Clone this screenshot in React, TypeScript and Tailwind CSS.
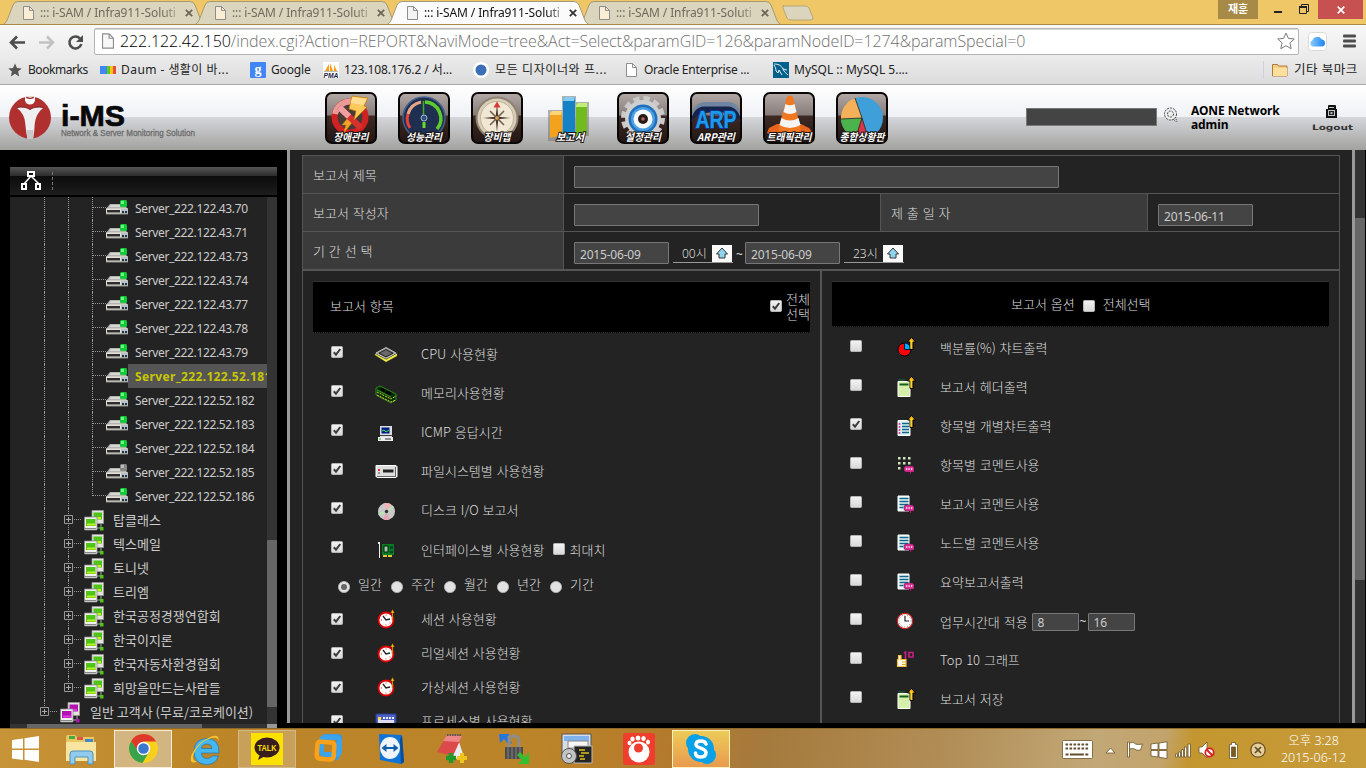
import React from 'react';

const KR = "font-['Noto_Sans','Noto_Sans_CJK_KR',sans-serif]";
const PAGE = "font-['Noto_Sans_CJK_KR','Noto_Sans',sans-serif]";

/* ---------- browser chrome ---------- */

function PageIcon({ fill = '#fff', big = false }: { fill?: string; big?: boolean }) {
  return (
    <svg className={big ? 'h-4 w-3 shrink-0' : 'h-[14px] w-[11px] shrink-0'} viewBox="0 0 11 14">
      <path d="M.5.5h6l4 4v9H.5z" fill={fill} stroke="#8d8d8d" />
      <path d="M6.5.5v4h4" fill="none" stroke="#8d8d8d" />
    </svg>
  );
}

function Tab({ active = false }: { active?: boolean }) {
  return (
    <div className={active ? 'relative z-10 -mr-[14px] h-[25px] w-[206px] shrink-0' : 'relative -mr-[14px] h-[25px] w-[206px] shrink-0'}>
      <svg className="absolute inset-0 h-[25px] w-[206px]" viewBox="0 0 206 25">
        <path
          d="M0 25C4 24.500 5.500 22 7 18L12 5Q13.500 1.500 17 1.500H189Q192.500 1.500 194 5L199 18C200.500 22 202 24.500 206 25Z"
          fill={active ? '#fbfbfb' : '#dcd5bd'}
          stroke={active ? '#a69a78' : '#a89a70'}
        />
        {active && <path d="M4 24.500h198" stroke="#fafafa" strokeWidth="1.500" />}
      </svg>
      <div className="relative flex h-[25px] items-center pl-[22px]">
        <PageIcon fill={active ? '#f4f4f4' : '#fbecd6'} />
        <div
          className={
            active
              ? 'ml-[6px] w-[140px] whitespace-nowrap text-[12px] tracking-[-0.120px] text-[#111] [mask-image:linear-gradient(to_right,#000_88%,rgba(0,0,0,.25))]'
              : 'ml-[6px] w-[140px] whitespace-nowrap text-[12px] tracking-[-0.120px] text-[#6f6a5c] [mask-image:linear-gradient(to_right,#000_88%,rgba(0,0,0,.25))]'
          }
        >
          ::: i-SAM / Infra911-Soluti
        </div>
        <svg className="ml-[5px] h-2 w-2 shrink-0" viewBox="0 0 8 8">
          <path d="M.8.8l6.400 6.400M7.200.8L.8 7.200" stroke={active ? '#333' : '#6a6557'} strokeWidth="1.800" />
        </svg>
      </div>
    </div>
  );
}

function TabStrip() {
  return (
    <div className="relative flex h-[25px] overflow-hidden border-b border-[#a98b49] bg-[#f0c766]">
      <div className="flex w-[782px] pl-[1px]">
        <Tab />
        <Tab />
        <Tab active />
        <Tab />
      </div>
      <svg className="mt-[5px] h-4 w-8" viewBox="0 0 32 16">
        <path d="M1 1h22q3 0 4 2l4 10q.5 2-2 2H9q-3 0-4-2L1 3q-.8-2 1-2z" fill="#dcd5bd" stroke="#b5a67c" />
      </svg>
      <div className="flex-1" />
      <div className="h-[19px] w-10 bg-[#a68a45] text-center text-[11px] font-bold leading-[18px] text-white">재훈</div>
      <div className="flex w-[60px] pt-1">
        <svg className="h-[12px] w-[60px]" viewBox="0 0 60 12">
          <path d="M16 7h8v2h-8z" fill="#222" />
          <path d="M41.500 2.500h7v7h-7zM43.500 2.500v-2h7v7h-2" fill="none" stroke="#222" />
          <path d="M41 2h8v2h-8z" fill="#222" />
        </svg>
      </div>
      <div className="mr-[3px] flex h-[19px] w-[45px] items-center justify-center bg-[#c75050]">
        <svg className="h-2 w-2" viewBox="0 0 8 8"><path d="M.7.7l6.600 6.600M7.300.7L.7 7.300" stroke="#fff" strokeWidth="1.700" /></svg>
      </div>
    </div>
  );
}

function Toolbar() {
  return (
    <div className="flex h-8 items-center bg-gradient-to-b from-[#f8f8f8] to-[#ebebeb]">
      <svg className="h-8 w-[94px] shrink-0" viewBox="0 0 94 32">
        <path d="M25 17.500H12M17 11.500l-6 6 6 6" fill="none" stroke="#4d4d4d" strokeWidth="2.600" />
        <path d="M39 17.500h13M47 11.500l6 6-6 6" fill="none" stroke="#c2c2c2" strokeWidth="2.600" />
        <path d="M80 13.500A6 6 0 1 0 81.300 19" fill="none" stroke="#4d4d4d" strokeWidth="2.600" />
        <path d="M83 10v7h-7z" fill="#4d4d4d" />
      </svg>
      <div className="flex h-[27px] w-[1205px] items-center rounded-[2px] border border-[#b4b4b4] bg-white pl-[7px] pr-[3px] shadow-[inset_0_1px_0_#d9d9d9]">
        <PageIcon fill="#f7f7f7" big />
        <div className="ml-[6px] whitespace-nowrap font-['Open_Sans',sans-serif] text-[16px] font-light tracking-[-0.080px] text-[#707070]">
          <span className="text-[#000]">222.122.42.150</span>/index.cgi?Action=REPORT&amp;NaviMode=tree&amp;Act=Select&amp;paramGID=126&amp;paramNodeID=1274&amp;paramSpecial=0
        </div>
        <div className="flex-1" />
        <svg className="h-[18px] w-[18px]" viewBox="0 0 18 18">
          <path d="M9 1l2.400 5.400 5.900.6-4.400 3.900 1.300 5.800L9 13.700l-5.200 3 1.300-5.800L.7 7l5.900-.6z" fill="#fff" stroke="#7a7a7a" />
        </svg>
      </div>
      <svg className="ml-[9px] h-[19px] w-[19px]" viewBox="0 0 19 19">
        <defs><linearGradient id="cl" x1="0" x2="1"><stop stopColor="#8ccafc" /><stop offset="1" stopColor="#1b84f4" /></linearGradient></defs>
        <rect x=".5" y=".5" width="18" height="18" rx="3" fill="#fff" stroke="#dadada" />
        <path d="M4.500 14.500a3.200 3.200 0 0 1-.3-6 5.300 5.300 0 0 1 9.600-1A3.600 3.600 0 0 1 14.500 14.500z" fill="url(#cl)" />
      </svg>
      <svg className="ml-[16px] h-[14px] w-[14px]" viewBox="0 0 14 14">
        <g fill="#4d4d4d"><rect y="0.500" width="13" height="3" rx="1" /><rect y="5.500" width="13" height="3" rx="1" /><rect y="10.500" width="13" height="3" rx="1" /></g>
      </svg>
    </div>
  );
}

function Bookmarks() {
  const t = 'whitespace-nowrap text-[12px]';
  return (
    <div className="flex h-[28px] items-center border-b border-[#a9a9a9] bg-gradient-to-b from-[#ebebeb] to-[#dcdcdc] pb-px text-[#222]">
      <div className="flex w-[100px] items-center pl-2">
        <svg className="h-[14px] w-[14px]" viewBox="0 0 14 14"><path d="M7 .5l2 4.500 4.700.4-3.600 3.200 1.100 4.800L7 10.800l-4.200 2.600 1.100-4.800L.3 5.400 5 5z" fill="#555" /></svg>
        <span className={t + ' ml-[6px] tracking-[-0.450px]'}>Bookmarks</span>
      </div>
      <div className="flex w-[150px] items-center">
        <svg className="h-2 w-4" viewBox="0 0 16 8"><path d="M0 0h7v8H0z" fill="#3f87f5" /><path d="M7 0h3v8H7z" fill="#5fc91c" /><path d="M10 0h3v8h-3z" fill="#f6c712" /><path d="M13 0h3v8h-3z" fill="#ee4b3a" /></svg>
        <span className={t + ' ml-[5px] tracking-[0.450px]'}>Daum - 생활이 바...</span>
      </div>
      <div className="flex w-[73px] items-center">
        <svg className="h-4 w-4" viewBox="0 0 16 16"><rect width="16" height="16" rx="1" fill="#4285f4" /><text x="8" y="12" textAnchor="middle" fontSize="14" fontWeight="bold" fontFamily="Liberation Serif" fill="#fff">g</text></svg>
        <span className={t + ' ml-[5px] tracking-[-0.150px]'}>Google</span>
      </div>
      <div className="flex w-[150px] items-center">
        <svg className="h-4 w-4" viewBox="0 0 16 16"><rect width="16" height="16" fill="#fff" /><path d="M2 9l4-7v7zM7 9V1l3 8zM11 9V3l3 6z" fill="#f89c0e" /><path d="M1 9.500h14" stroke="#bbb" /><text x="0.500" y="15.800" fontSize="6.500" fontWeight="bold" fontFamily="Liberation Sans" fontStyle="italic" fill="#224" textLength="15" lengthAdjust="spacingAndGlyphs">PMA</text></svg>
        <span className={t + ' ml-[5px] tracking-[-0.080px]'}>123.108.176.2 / 서...</span>
      </div>
      <div className="flex w-[153px] items-center">
        <svg className="h-4 w-4" viewBox="0 0 16 16"><circle cx="8" cy="8" r="8" fill="#fff" /><circle cx="8" cy="8" r="5.500" fill="#3a6fb7" /></svg>
        <span className={t + ' ml-[6px] tracking-[0.600px]'}>모든 디자이너와 프...</span>
      </div>
      <div className="flex w-[147px] items-center">
        <PageIcon />
        <span className={t + ' ml-[7px] tracking-[-0.250px]'}>Oracle Enterprise ...</span>
      </div>
      <div className="flex items-center">
        <svg className="h-4 w-4" viewBox="0 0 16 16"><rect width="16" height="16" fill="#00618a" /><path d="M1 2c4 0 7 1 9 5 1 3 3 4 5 6M1 3c1 2 2 3 2 6l2 2 1-3 3 5M10 7l4 1" fill="none" stroke="#fff" strokeWidth=".9" /></svg>
        <span className={t + ' ml-[5px]'}>MySQL :: MySQL 5....</span>
      </div>
      <div className="flex-1" />
      <div className="flex w-[103px] items-center border-l border-[#c9d3dc] pl-[8px]">
        <svg className="h-[14px] w-4" viewBox="0 0 16 14"><path d="M.5 3V1.500h5l1 1.500h8.500v10H.5z" fill="#f5cf85" stroke="#b07a3c" /><path d="M1 5h14v8H1z" fill="#fddf9e" /></svg>
        <span className="ml-[6px] whitespace-nowrap text-[12.500px] tracking-[0.500px]">기타 북마크</span>
      </div>
    </div>
  );
}

/* ---------- application header ---------- */

function MenuArt({ kind }: { kind: number }) {
  switch (kind) {
    case 0:
      return (
        <g>
          <circle cx="25" cy="25" r="15.500" fill="#4a3a36" stroke="#d02222" strokeWidth="6" />
          <path d="M10 22a15.500 15.500 0 0 1 18-12.300" fill="none" stroke="#eb9a9a" strokeWidth="6" />
          <path d="M22 27l8 0-12 15 3-9h-4z" fill="#f0a52a" stroke="#c47a12" strokeWidth=".6" />
          <path d="M14 15l22 21" stroke="#d8302c" strokeWidth="6" />
          <path d="M14 15l10 9.500" stroke="#eea0a0" strokeWidth="6" />
          <path d="M27 4l16 2-4 8 3 1-13 13 2-9-7-2z" fill="#fdc95a" stroke="#c47a12" strokeWidth=".8" />
          <path d="M27.500 5l14 2-3 6-13-2z" fill="#fee6a6" opacity=".7" />
        </g>
      );
    case 1:
      return (
        <g>
          <circle cx="26" cy="26" r="21" fill="#1e2f50" stroke="#46608c" strokeWidth="1.500" />
          <path d="M12 36a16.500 16.500 0 0 1-2-14" fill="none" stroke="#e8433a" strokeWidth="3" />
          <path d="M10 22A17 17 0 0 1 23 10" fill="none" stroke="#e7a488" strokeWidth="3" />
          <path d="M27 10a16.500 16.500 0 0 1 12 27" fill="none" stroke="#5ecb2d" strokeWidth="3.500" />
          <path d="M25.500 9v15" stroke="#3faf2a" strokeWidth="1.500" />
          <circle cx="26" cy="26" r="3" fill="#31507c" stroke="#9fb4cf" />
          <path d="M26 30v6" stroke="#6ad92c" strokeWidth="3" />
        </g>
      );
    case 2:
      return (
        <g>
          <circle cx="26" cy="26" r="20.500" fill="#d8cdb6" stroke="#8d8272" strokeWidth="2" />
          <circle cx="26" cy="26" r="16.500" fill="#f0e8d4" stroke="#b8a88c" strokeWidth=".8" />
          <path d="M26 12l1.300 12.700L40 26l-12.700 1.300L26 40l-1.300-12.700L12 26l12.700-1.300z" fill="#463528" />
          <path d="M19 19l14 14M33 19L19 33" stroke="#6e5b48" strokeWidth="1.500" />
          <path d="M26 9.500l3.500 6h-7z" fill="#e03535" />
          <circle cx="26" cy="26" r="2.300" fill="#d6a45c" stroke="#463528" strokeWidth=".7" />
        </g>
      );
    case 3:
      return (
        <g>
          <g fill="#777" opacity=".55"><path d="M4 18h14v31H4zM18 4h14v41H18zM31 10h14v34H31z" /></g>
          <path d="M6 21l2-2h10v24l-12 3z" fill="#f3a21b" /><path d="M6 21l2-2h10l-1 4H6z" fill="#fdd67c" />
          <path d="M19 8l2-3h10v40H19z" fill="#1682c6" /><path d="M19 8l2-3h10l-1 4H19z" fill="#83cdf3" />
          <path d="M32 13l2-2h9v31l-11 3z" fill="#71bb1f" /><path d="M32 13l2-2h9v4H32z" fill="#c3ee79" />
        </g>
      );
    case 4:
      return (
        <g>
          <circle cx="26" cy="26" r="19.500" fill="none" stroke="#c9c9c9" strokeWidth="5" strokeDasharray="6.200 4" />
          <circle cx="26" cy="26" r="18" fill="#cfcfcf" />
          <circle cx="26" cy="27" r="14.500" fill="#1e6fbd" />
          <circle cx="26" cy="27" r="12" fill="#4b9fe2" />
          <circle cx="26" cy="27" r="9.500" fill="#f4f9fc" />
          <circle cx="26" cy="27" r="5" fill="#2a1815" />
          <circle cx="26" cy="27" r="1.800" fill="#a66" />
        </g>
      );
    case 5:
      return (
        <g>
          <path d="M2 24Q4 10 16 10h22q11 0 12 14-6-7-24-7T2 24z" fill="#6f86a3" />
          <path d="M1 30Q3 15 14 14.500h24q11 .5 13 15.500-6-10-25-10T1 30z" fill="#16234d" />
          <text x="26" y="36" textAnchor="middle" textLength="41" lengthAdjust="spacingAndGlyphs" fontSize="23" fontWeight="bold" fontFamily="Liberation Sans" fill="#1a9bea" stroke="#0c3c9c" strokeWidth="1.500" paintOrder="stroke">ARP</text>
        </g>
      );
    case 6:
      return (
        <g>
          <path d="M6 36l8-4h24l8 4 4 5-8 3H10l-6-3z" fill="#e8641a" />
          <path d="M24 5q3-3 6 0l8 33q-11 7-23 0z" fill="#f07820" />
          <path d="M22.500 12q4.500 2.500 9 0l2 8q-6.500 4-13 0zM18.500 26q8.500 5 17 0l2 7q-10.500 6-21 0z" fill="#f4f4f4" />
        </g>
      );
    default:
      return (
        <g>
          <circle cx="26" cy="26" r="21" fill="#3f9fd9" />
          <path d="M26 26L19 6A21 21 0 0 0 5 27z" fill="#f4b15a" />
          <path d="M26 26L5 27a21 21 0 0 0 14 18.500z" fill="#4cb34c" />
          <path d="M26 26l-7 19.500a21 21 0 0 0 13 0z" fill="#d9364c" />
          <path d="M26 26L19 6M26 26L5 27M26 26l-6 19M26 26l6 19" stroke="#2b211c" strokeWidth=".8" />
        </g>
      );
  }
}

const MENU = ['장애관리', '성능관리', '장비맵', '보고서', '설정관리', 'ARP관리', '트래픽관리', '종합상황판'];
const MENU_W = [35, 36, 27, 28, 36, 38, 45, 45];

function AppHeader() {
  return (
    <div className="flex h-[65px] items-start bg-[linear-gradient(to_bottom,#fff_0%,#eff1f5_50%,#d5d6da_50%,#a2a29f_100%)]">
      <svg className="ml-[8px] mt-[9px] h-[46px] w-[46px] shrink-0" viewBox="0 0 46 46">
        <circle cx="22" cy="23.500" r="21" fill="#b03030" />
        <path d="M17 2.500h10v4q-1 4-5 4t-5-4z" fill="#fafafa" />
        <path d="M18.500 2.600q3.500 2.400 7 0l.5 1.500q-4 2-8 0z" fill="#8d2424" />
        <path d="M8.500 13.500Q17 12 22 15.500 27 12 35.500 13.500 27.500 20 26.700 30 26.500 38 25 45h-5.500Q18 38 17.300 30 17 20 8.500 13.500z" fill="#efeff1" />
        <path d="M8.500 13.500Q17 12 22 15.500 27 12 35.500 13.500" fill="none" stroke="#6e1a1a" strokeWidth=".9" />
        <path d="M18.500 36h7.200L25 45h-5.500z" fill="#c8c9cb" />
      </svg>
      <svg className="ml-[6px] mt-[12px] h-[44px] w-[140px] shrink-0" viewBox="0 0 140 44">
        <text x="1" y="28.500" fontSize="29" fontWeight="bold" fontFamily="Liberation Sans" fill="#080808" stroke="#080808" strokeWidth=".7" textLength="64" lengthAdjust="spacingAndGlyphs">i-MS</text>
        <text x="1" y="39" fontSize="9" fontFamily="Liberation Sans" fill="#6c6c6c" stroke="#6c6c6c" strokeWidth=".3" textLength="134" lengthAdjust="spacingAndGlyphs">Network &amp; Server Monitoring Solution</text>
      </svg>
      <div className="ml-[125px] mt-[7px] flex gap-[21px]">
        {MENU.map((m, i) => (
          <svg key={m} className="h-[52px] w-[52px]" viewBox="0 0 52 52">
            <defs><linearGradient id="tile" x2="0" y2="1"><stop stopColor="#b3aaa8" /><stop offset=".44" stopColor="#867c79" /><stop offset=".46" stopColor="#3e2a25" /><stop offset="1" stopColor="#211512" /></linearGradient></defs>
            {i !== 3 && <rect x="1" y="1" width="50" height="50" rx="6" fill="url(#tile)" stroke="#090606" strokeWidth="2" />}
            <MenuArt kind={i} />
            <text x="26" y="49" textAnchor="middle" textLength={MENU_W[i]} lengthAdjust="spacingAndGlyphs" fontSize="10.500" fontWeight="bold" fontStyle="italic" fontFamily="Noto Sans CJK KR" fill="#fff" stroke="#1a1312" strokeWidth="2" paintOrder="stroke">{m}</text>
          </svg>
        ))}
      </div>
      <div className="ml-[138px] mt-[23px] h-[18px] w-[131px] border border-[#777] bg-[#444]" />
      <svg className="ml-[7px] mt-[22px] h-4 w-4" viewBox="0 0 16 16">
        <circle cx="6.500" cy="7" r="6" fill="#eee" stroke="#444" strokeDasharray="2 1" /><circle cx="6.500" cy="7" r="3" fill="none" stroke="#444" strokeDasharray="2 1" /><path d="M9 12l3 3M11.500 10l1.500 5" stroke="#444" strokeDasharray="1 1" />
      </svg>
      <div className="ml-[11px] mt-[19px] w-[100px] whitespace-nowrap text-[12px] font-bold leading-[14px] tracking-[-0.100px] text-black">
        <div>AONE Network</div>
        <div>admin</div>
      </div>
      <svg className="ml-[20px] mt-[19px] h-[30px] w-[46px]" viewBox="0 0 46 30">
        <path d="M15 5h2V2q0-1 1-1h6q1 0 1 1v3h1v9H15z" fill="#111" /><path d="M18 3h5v1h-5zM17 6h7v6h-7z" fill="#c4c4c4" /><path d="M18 7h5v4h-5z" fill="#222" /><path d="M19.500 8h2v2h-2z" fill="#bbb" />
        <text x="1" y="26" fontSize="7.500" fontWeight="bold" fontFamily="DejaVu Sans" fill="#333" textLength="41" lengthAdjust="spacingAndGlyphs">Logout</text>
      </svg>
    </div>
  );
}

/* ---------- tree ---------- */

function ServerIcon({ off }: { off?: boolean }) {
  return (
    <svg className="mt-[4px] h-[15px] w-[22px] shrink-0" viewBox="0 0 22 15">
      <path d="M4 4h13l5 5H0z" fill="#b4b4ae" />
      <path d="M5 5h9v2H3z" fill="#d8d8d3" />
      <path d="M0 8.500h22V14H0z" fill="#e4e2dc" />
      <path d="M1 10h13v2.500H1z" fill="#2e2d2a" />
      <path d="M15 9h7v5h-7z" fill="#b9c2cc" /><path d="M16 11h2v2h-2zM19 11h2v2h-2z" fill="#26303c" /><path d="M0 13.500h22v1H0z" fill="#8f8e87" />
      <rect x="14" y="0" width="7" height="7" rx="1.500" fill={off ? '#858585' : '#12c936'} />
      <rect x="15" y="1" width="3" height="3" fill={off ? '#b9b9b9' : '#6df57f'} />
    </svg>
  );
}

function NodeIcon({ c, l }: { c: string; l: string }) {
  return (
    <svg className="h-[21px] w-[20px] shrink-0" viewBox="0 0 20 21">
      <path d="M8 .5h11.500v13H8z" fill="#e4e4e0" stroke="#999" strokeWidth=".8" />
      <path d="M9.500 2.500h8.500v7H9.500z" fill={c} /><path d="M12 7h5v2h-5z" fill={l} />
      <path d="M.5 7H13v13H.5z" fill="#f0f0ec" stroke="#888" strokeWidth=".8" />
      <path d="M2 9h9.500v7H2z" fill={c} /><path d="M3 13.500h8v2H3z" fill={l} />
      <path d="M13 18h4M17 14v3" stroke="#aaa" /><path d="M1 18.500h11" stroke="#888" />
      <path d="M16 17h3.500v3.500H16z" fill={c} />
    </svg>
  );
}

function PlusBox() {
  return (
    <div className="flex items-center">
      <svg className="h-[9px] w-[9px]" viewBox="0 0 9 9"><path d="M.5.5h8v8h-8z" fill="#232323" stroke="#999" /><path d="M2 4.500h5M4.500 2v5" stroke="#aaa" /></svg>
      <div className="ml-px w-[7px] border-t border-dotted border-[#999]" />
    </div>
  );
}

const SERVERS = ['43.70', '43.71', '43.73', '43.74', '43.77', '43.78', '43.79', '52.181', '52.182', '52.183', '52.184', '52.185', '52.186'];
const GROUPS = ['탑클래스', '텍스메일', '토니넷', '트리엠', '한국공정경쟁연합회', '한국이지론', '한국자동차환경협회', '희망을만드는사람들'];
const VLINE = 'w-6 shrink-0 self-stretch border-l border-dotted border-[#999]';

function Tree() {
  return (
    <div className="-mt-px">
      {SERVERS.map((s, i) => {
        const sel = s === '52.181';
        return (
          <div key={s} className="flex h-6 pl-[34px]">
            <div className={VLINE} />
            <div className={VLINE} />
            <div className={i === 12 ? 'h-3 w-px border-l border-dotted border-[#999]' : 'h-6 w-px border-l border-dotted border-[#999]'} />
            <div className="mt-[11px] w-[13px] shrink-0 border-t border-dotted border-[#999]" />
            <ServerIcon off={i === 11} />
            <div
              className={
                sel
                  ? 'flex-1 overflow-hidden whitespace-nowrap bg-[#555] pl-[7px] text-[12px] font-bold leading-[26px] tracking-[0.360px] text-[#c8c800]'
                  : 'flex-1 whitespace-nowrap pl-[7px] text-[12px] leading-[26px] tracking-[-0.350px] text-[#ccc]'
              }
            >
              Server_222.122.{s}
            </div>
          </div>
        );
      })}
      {GROUPS.map((g, i) => (
        <div key={g} className="flex h-6 items-center pl-[34px]">
          <div className="w-5 shrink-0 self-stretch border-l border-dotted border-[#999]" />
          <div className="relative w-5 shrink-0 self-stretch pt-[7px]">
            <div className={i === 7 ? 'absolute left-1 top-0 h-2 border-l border-dotted border-[#999]' : 'absolute left-1 top-0 h-6 border-l border-dotted border-[#999]'} />
            <div className="relative"><PlusBox /></div>
          </div>
          <NodeIcon c="#4fc51a" l="#c5ee20" />
          <div className={'ml-[9px] whitespace-nowrap text-[13px] text-[#ccc] ' + PAGE}>{g}</div>
        </div>
      ))}
      <div className="flex h-6 items-center pl-[30px]">
        <div className="relative w-5 shrink-0 self-stretch pt-[7px]">
          <div className="absolute left-1 top-0 h-2 border-l border-dotted border-[#999]" />
          <div className="relative"><PlusBox /></div>
        </div>
        <NodeIcon c="#b312b3" l="#e23ae2" />
        <div className={'ml-[10px] whitespace-nowrap text-[13px] text-[#ccc] ' + PAGE}>일반 고객사 (무료/코로케이션)</div>
      </div>
    </div>
  );
}

function Sidebar() {
  return (
    <div className="h-[578px] w-[287px] shrink-0 bg-black pl-[10px] pt-[17px]">
      <div className="flex h-[28px] w-[267px] bg-[linear-gradient(to_bottom,#555_0,#2c2c2c_9px,#0c0c0c_9px,#1d1d1d_28px)]">
        <svg className="ml-[10px] mt-[3px] h-[22px] w-[23px]" viewBox="0 0 23 22">
          <path d="M11 6L4 14M11 6l8 8" stroke="#fff" strokeWidth="1.500" />
          <path d="M8 2h6v4H8zM2 14h4v5H2zM16 14h4v5h-4z" fill="#111" stroke="#fff" strokeWidth="2" />
        </svg>
        <div className="ml-[9px] mt-[5px] h-[18px] border-l border-dashed border-[#777]" />
      </div>
      <div className="mt-[2px] flex h-[527px] w-[267px]">
        <div className="h-[527px] w-[257px] overflow-hidden bg-[#232323]"><Tree /></div>
        <div className="w-[10px] bg-[#333] pt-[343px]"><div className="h-[167px] rounded-[1px] bg-[#666]" /></div>
      </div>
      <div className="flex h-1 w-[267px] bg-[#333]">
        <div className="ml-[17px] w-[175px] bg-[#666]" />
        <div className="flex-1" />
        <div className="w-[10px] bg-[#999]" />
      </div>
    </div>
  );
}

/* ---------- form parts ---------- */

function Check({ on = false, cls = '' }: { on?: boolean; cls?: string }) {
  return (
    <svg className={'h-3 w-3 shrink-0 ' + cls} viewBox="0 0 12 12">
      <defs><linearGradient id="cb" x2="0" y2="1"><stop stopColor="#f4f4f4" /><stop offset="1" stopColor="#d8d8d8" /></linearGradient></defs>
      <rect x=".5" y=".5" width="11" height="11" rx="1" fill="url(#cb)" stroke="#b5b5b5" />
      {on && <path d="M2.800 6.300l2.200 2.400L9.300 3" fill="none" stroke="#3c3c3c" strokeWidth="2" />}
    </svg>
  );
}

function Radio({ on = false }: { on?: boolean }) {
  return (
    <svg className="mt-[2px] h-3 w-3 shrink-0" viewBox="0 0 12 12">
      <circle cx="6" cy="6" r="5.600" fill="#e2e2e2" stroke="#b5b5b5" strokeWidth=".8" />
      {on && <circle cx="6" cy="6" r="3" fill="#666" />}
    </svg>
  );
}

function Field({ w, children, h = 'h-[22px]' }: { w: string; children?: React.ReactNode; h?: string }) {
  return (
    <div className={'flex shrink-0 items-center rounded-[1px] border border-[#777] bg-[#444] pl-[5px] pt-[3px] text-[12px] font-normal leading-none tracking-[-0.200px] text-[#ccc] ' + KR + ' ' + w + ' ' + h}>{children}</div>
  );
}

function Hour({ v }: { v: string }) {
  return (
    <div className="ml-[4px] mt-[3px] flex h-[18px] w-[60px] items-center border-b border-[#999]">
      <span className={'ml-[9px] w-[30px] whitespace-nowrap text-[12px] ' + KR}>{v}시</span>
      <svg className="h-[17px] w-[20px]" viewBox="0 0 20 17">
        <path d="M0 0h20v17H0z" fill="#fafafa" /><path d="M10 3l5.500 6H13v4H7V9H4.500z" fill="#8fd3ee" stroke="#333" />
      </svg>
    </div>
  );
}

function Up() {
  return <g><path d="M13 11.500V4h-2.500L14.500-.5l4 4.500H16v7.500z" fill="#fb0" stroke="#000" strokeWidth="1" /><path d="M14 2.500v8" stroke="#fe6" strokeWidth=".9" /></g>;
}

function Talk() {
  return <g><path d="M8 11h8v1h1v5h-3v2h-1v-2H8v-1H7v-4h1z" fill="#dc2f94" stroke="#4a1034" strokeWidth=".4" /><path d="M9 14h1.300M11.500 14h1.300M14 14h1.300" stroke="#fff" strokeWidth="1.400" /></g>;
}

function Art({ k }: { k: string }) {
  let g: React.ReactNode = null;
  if (k === 'cpu') g = <g><path d="M0 11v-1.500l11 6 11-6V12l-11 6z" fill="#f2ee40" stroke="#77752c" strokeWidth=".5" strokeDasharray="1 1" /><path d="M11 3.500l10 5.500L11 14.500 1 9z" fill="#8c8c8c" stroke="#ddd" strokeWidth=".8" /><path d="M11 5.500l7 3.700-7 3.600-7-3.600z" fill="#686868" stroke="#222" /></g>;
  else if (k === 'mem') g = <g><path d="M1 5l4-2 16 8v6l-5 3L1 12z" fill="#052c05" stroke="#2c8b20" /><path d="M6 6l4 2M11 9l5 2" stroke="#000" strokeWidth="3" /><path d="M2 9l14 7 5-3M2 12l14 7 5-2" fill="none" stroke="#e6d83a" strokeDasharray="2 1" /><path d="M2 7l14 7" stroke="#3fa62b" /></g>;
  else if (k === 'icmp') g = <g><path d="M5 4h12v11H5z" fill="#ddd" /><path d="M6.500 5.500h8v6h-8z" fill="#001890" /><path d="M7 9l2-1 2 2 3-2" stroke="#3f3" fill="none" /><path d="M5 13.500h12" stroke="#444" /><path d="M3 15h15v4H3z" fill="#eee" /><path d="M4 17h2" stroke="#2a2" /><path d="M10 17h6" stroke="#333" /></g>;
  else if (k === 'disk') g = <g><path d="M1 4.500h20l1 1v10l-1 1H2l-1-1z" fill="#ddd" stroke="#fff" /><path d="M2 15.500h19M20.500 6v9" stroke="#666" /><path d="M8 8.500h10.500v3H8z" fill="#222" /><path d="M3 8h2v2H3z" fill="#d33" /><path d="M3 12h2" stroke="#555" /></g>;
  else if (k === 'cd') g = <g><circle cx="11.500" cy="11.500" r="8.500" fill="#c9c9c9" /><path d="M11.500 11.500L9 3.300a8.500 8.500 0 0 1 7 1.200z" fill="#f3b5b5" /><path d="M11.500 11.500l3 8a8.500 8.500 0 0 1-6 .1z" fill="#e5a5b5" /><path d="M11.500 11.500l-8 3M11.500 11.500l7-5" stroke="#b9e6b4" strokeWidth="2" /><circle cx="11.500" cy="11.500" r="2.200" fill="#333" stroke="#eee" strokeWidth=".7" /></g>;
  else if (k === 'nic') g = <g><path d="M3 3h2v16H4V5H3z" fill="#eee" /><path d="M7 5h12v11H7z" fill="#0a7a20" /><path d="M9 7h4v6H9z" fill="#a8c8a8" stroke="#021" /><path d="M15 7h3v3h-3zM15 12h3v2h-3z" fill="#043" /><path d="M8 17h10" stroke="#dc3" strokeWidth="2" strokeDasharray="4 1" /></g>;
  else if (k === 'clock') g = <g><circle cx="11" cy="12" r="7.500" fill="#fff" stroke="#e00000" strokeWidth="1.800" /><path d="M8 8l3 4 4-1" stroke="#222" fill="none" strokeWidth="1.300" /><path d="M11 6.500v1M11 16.500v1M6 12h1M14.500 15h1" stroke="#e22" /><path d="M17 12V5h-1.500l2-3.500 2 3.500H18v7z" fill="#fb0" stroke="#630" strokeWidth=".4" /></g>;
  else if (k === 'work') g = <g><circle cx="8" cy="10" r="7.700" fill="#fff" stroke="#c22" strokeWidth="1.200" /><circle cx="8" cy="10" r="6" fill="none" stroke="#666" strokeWidth=".8" strokeDasharray="1 2" /><path d="M8 5v5h4" stroke="#222" fill="none" strokeWidth="1.200" /></g>;
  else if (k === 'proc') g = <g><path d="M1 4h20v12H1z" fill="#4a62c8" stroke="#2b3c8c" /><path d="M3 7h3v3H3z" fill="#fd5" /><path d="M8 7h2v2H8zM11 7h2v2h-2zM14 7h2v2h-2zM17 7h2v2h-2z" fill="#eee" /><path d="M3 10h16v4H3z" fill="#dde" /></g>;
  else if (k === 'pie') g = <g><circle cx="7.500" cy="11.500" r="6.500" fill="#f00" stroke="#000" /><path d="M7.500 11.500V5A6.500 6.500 0 0 1 14 11.500z" fill="#0af" stroke="#024" /><Up /></g>;
  else if (k === 'head') g = <g><path d="M1 4.500h12v15H1z" fill="#d5eea8" stroke="#fff" /><path d="M2.500 7.500h9" stroke="#17601a" strokeWidth="2" /><path d="M1 3h7" stroke="#264" /><Up /></g>;
  else if (k === 'list') g = <g><path d="M1 4.500h12v15H1z" fill="#d8f0f2" stroke="#fff" /><path d="M5 7.500h7M5 10.500h7M5 13.500h7M5 16.500h7" stroke="#168" strokeWidth="1.400" /><path d="M2.500 7v11" stroke="#e2399b" strokeWidth="1.600" strokeDasharray="2 1" /><Up /></g>;
  else if (k === 'dots') g = <g><g fill="#cfe3bd">{[3, 8, 13].map((y) => [1, 6, 11].map((x) => (y === 13 && x > 1 ? null : <rect key={x + '-' + y} x={x} y={y - 1} width="2.500" height="2.500" />)))}</g><Talk /></g>;
  else if (k === 'doc') g = <g><path d="M1 2h11v15H1z" fill="#e7f6f8" stroke="#fff" /><path d="M2.500 4.500h9M2.500 7.500h9M2.500 10.500h9M2.500 13.500h4" stroke="#168" strokeWidth="1.400" /><Talk /></g>;
  else g = <g><path d="M.5 16.500V9.500h1V5.500h2.500v4h5v7z" fill="#fffbe8" stroke="#f2bd3a" strokeWidth="1.200" /><path d="M5 12h4M5 14.500h4" stroke="#e0a828" /><path d="M7 3l1.500-1v7M12 2.500h4v4.500h-4z" fill="none" stroke="#c41f82" strokeWidth="1.700" /></g>;
  return <svg className="h-[22px] w-[22px] shrink-0 overflow-visible" viewBox="0 0 22 22">{g}</svg>;
}

const LEFT1: [string, string][] = [['cpu', 'CPU 사용현황'], ['mem', '메모리사용현황'], ['icmp', 'ICMP 응답시간'], ['disk', '파일시스템별 사용현황'], ['cd', '디스크 I/O 보고서'], ['nic', '인터페이스별 사용현황']];
const LEFT2: [string, string][] = [['clock', '세션 사용현황'], ['clock', '리얼세션 사용현황'], ['clock', '가상세션 사용현황'], ['proc', '프로세스별 사용현황']];
const RIGHT: [string, string][] = [['pie', '백분률(%) 챠트출력'], ['head', '보고서 헤더출력'], ['list', '항목별 개별챠트출력'], ['dots', '항목별 코멘트사용'], ['doc', '보고서 코멘트사용'], ['doc', '노드별 코멘트사용'], ['doc', '요약보고서출력'], ['work', '업무시간대 적용'], ['top', 'Top 10 그래프'], ['head', '보고서 저장']];

const LABEL = 'flex w-[261px] shrink-0 items-center border-r border-[#555] bg-[#3b3b3b] pt-px pl-[10px] whitespace-pre';

function Main() {
  return (
    <div className={'flex h-[573px] w-[1062px] flex-col overflow-hidden bg-[#232323] pl-[12px] pt-[5px] text-[13px] font-light text-[#dedede] [word-spacing:1px] ' + PAGE}>
      <div className="w-[1038px] shrink-0 border border-b-0 border-[#555]">
        <div className="flex h-[38px] border-b border-[#555]">
          <div className={LABEL}>보고서 제목</div>
          <div className="pl-[10px] pt-[10px]"><Field w="w-[485px]" /></div>
        </div>
        <div className="flex h-[38px] border-b border-[#555]">
          <div className={LABEL}>보고서 작성자</div>
          <div className="w-[316px] pl-[10px] pt-[10px]"><Field w="w-[185px]" /></div>
          <div className="flex w-[268px] items-center border-x border-[#555] bg-[#3b3b3b] pl-[10px] pt-px">제 출 일 자</div>
          <div className="pl-[10px] pt-[10px]"><Field w="w-[95px]">2015-06-11</Field></div>
        </div>
        <div className="flex h-[39px] border-b-2 border-[#555]">
          <div className={LABEL}>기 간 선 택</div>
          <div className="flex pl-[10px] pt-[10px]">
            <Field w="w-[95px]">2015-06-09</Field>
            <Hour v="00" />
            <span className={'ml-[3px] w-[9px] pt-[4px] text-[12px] font-normal ' + KR}>~</span>
            <Field w="w-[95px]">2015-06-09</Field>
            <Hour v="23" />
          </div>
        </div>
      </div>
      <div className="flex h-[460px] w-[1038px] shrink-0 overflow-hidden border-x border-[#555]">
        <div className="w-[519px] shrink-0 border-r-2 border-[#555] pl-[10px] pt-[10px]">
          <div className="flex h-[52px] w-[497px] items-center border-b border-t border-b-[#333] border-t-[#333] bg-black pl-[17px] [border-bottom-style:dotted]">
            <span className="-mt-[2px] w-[440px] shrink-0">보고서 항목</span>
            <Check on cls="-mt-[2px]" />
            <div className="-mt-[2px] ml-[4px] w-[24px] shrink-0 whitespace-nowrap leading-[15px]">
              <div>전체</div>
              <div>선택</div>
            </div>
          </div>
          <div className="pt-[2px]">
            {LEFT1.map(([k, t]) => (
              <div key={t} className="flex h-[39px] items-center pl-[18px]">
                <Check on cls="-mt-[5px]" />
                <div className="ml-[32px] mt-px h-[22px]"><Art k={k} /></div>
                <span className={k === 'nic' ? 'ml-[24px] whitespace-nowrap' : '-mt-[2px] ml-[24px] whitespace-nowrap'}>{t}</span>
                {k === 'nic' && <><Check cls="ml-[9px] -mt-[2px]" /><span className="ml-[4px]">최대치</span></>}
              </div>
            ))}
            <div className="flex h-[33px] items-center pl-[25px]">
              {['일간', '주간', '월간', '년간', '기간'].map((t, i) => (
                <div key={t} className="flex w-[53px] items-center"><Radio on={i === 0} /><span className="-mt-[3px] ml-[8px] whitespace-nowrap">{t}</span></div>
              ))}
            </div>
            {LEFT2.map(([k, t]) => (
              <div key={t} className="flex h-[34px] items-center pl-[18px]">
                <Check on />
                <div className="ml-[32px] h-[22px]"><Art k={k} /></div>
                <span className="ml-[24px] whitespace-nowrap">{t}</span>
              </div>
            ))}
          </div>
        </div>
        <div className="flex-1 pl-[10px] pt-[10px]">
          <div className="flex h-[46px] w-[497px] items-center border-b border-t border-b-[#333] border-t-[#333] bg-black pl-[179px] [border-bottom-style:dotted]">
            <span>보고서 옵션</span>
            <Check cls="ml-[8px] mt-[3px]" />
            <span className="ml-[8px]">전체선택</span>
          </div>
          <div className="pt-px">
            {RIGHT.map(([k, t], i) => (
              <div key={t} className="flex h-[39px] items-center pl-[18px]">
                <Check on={i === 2} cls="-mt-[4px]" />
                <div className="ml-[35px] mt-[2px] h-[22px]"><Art k={k} /></div>
                <span className={k === 'work' ? 'ml-[21px] mt-[2px] whitespace-nowrap' : 'ml-[21px] whitespace-nowrap'}>{t}</span>
                {k === 'work' && (
                  <>
                    <div className="ml-[4px] mt-[2px]"><Field w="w-[47px]" h="h-[18px]">8</Field></div>
                    <span className={'mt-[3px] w-[9px] pl-px text-[12px] font-normal ' + KR}>~</span>
                    <div className="mt-[2px]"><Field w="w-[47px]" h="h-[18px]">16</Field></div>
                  </>
                )}
              </div>
            ))}
          </div>
        </div>
      </div>
    </div>
  );
}

/* ---------- taskbar ---------- */

function Slot({ w, frame, children }: { w: string; frame?: 'active' | 'open' | 'alert'; children: React.ReactNode }) {
  const f =
    frame === 'active' ? ' border border-[#f7ecd4] bg-[#d3b582]' : frame === 'open' ? ' border border-[#d3b887] bg-[#c8a05a]' : frame === 'alert' ? ' border border-[#fdf0bb] bg-gradient-to-b from-[#eccb58] to-[#e89a4e]' : '';
  return <div className={'flex h-[38px] shrink-0 items-center justify-center ' + w + f}>{children}</div>;
}

function Taskbar() {
  const s = 'h-8 w-8';
  return (
    <div className="flex h-10 items-center border-t border-[#8d6a2c] bg-[linear-gradient(100deg,#c79437_0%,#bc8528_15%,#bb8429_40%,#b57a2b_48%,#a57a3d_56%,#b28f58_70%,#c2a877_80%,#c2a36b_85%,#c4962f_87%,#c69b3a_100%)]">
      <Slot w="w-[50px]">
        <svg className="h-[26px] w-[27px]" viewBox="0 0 27 26"><path d="M0 4l11-1.500v10H0zM12.500 2.300L27 0v12.500H12.500zM0 14h11v10L0 22.500zM12.500 14H27v12l-14.500-2.200z" fill="#fff" /></svg>
      </Slot>
      <Slot w="w-[62px]">
        <svg className={s} viewBox="0 0 32 32">
          <path d="M1 4l1-2h8l2 2h17v24H2z" fill="#e9c961" /><path d="M4 3h6v3H4z" fill="#4a4" /><path d="M12 4h6v3h-6z" fill="#d54" /><path d="M20 6h8v3h-8z" fill="#48c" />
          <path d="M1 9h30v19H1z" fill="#f8e6a0" /><path d="M5 31V21q0-3 3-3h17q3 0 3 3v10h-5v-7H10v7z" fill="#93cbee" stroke="#4a91c0" />
        </svg>
      </Slot>
      <div className="w-[2px]" />
      <Slot w="w-[58px]" frame="active">
        <svg className="h-[29px] w-[29px]" viewBox="0 0 29 29">
          <circle cx="14.500" cy="14.500" r="14.500" fill="#f8cf1c" /><path d="M2 7.200A14.500 14.500 0 0 1 27.200 7.500H14.500L9 18z" fill="#dd3a2b" /><path d="M2 7.200A14.500 14.500 0 0 0 13.500 29l6.500-11-11-1z" fill="#38a349" />
          <circle cx="14.500" cy="14.500" r="6.700" fill="#fff" /><circle cx="14.500" cy="14.500" r="5.300" fill="#3a78d0" />
        </svg>
      </Slot>
      <Slot w="w-[66px]">
        <svg className={s} viewBox="0 0 32 32">
          <path d="M30 20H12.500q.5 5.500 5.500 5.500 4 0 5-2.500h6.500q-3 8.500-12 8.500Q5 31 5 18.500 5.500 5.500 18 5.500 30.500 6 30 20zM12.500 15.500h10.500q-.5-4.500-5-4.500-5 0-5.500 4.500z" fill="#45b8f2" stroke="#1775b8" strokeWidth=".7" />
          <path d="M29.500 8q1-7.500-7-4.500Q8 9 2.500 22q-3 10 6 6.500-6 0-4-7Q9 9 22.500 5q6-2 7 3z" fill="#f5c832" />
        </svg>
      </Slot>
      <Slot w="w-[58px]" frame="open">
        <svg className={s} viewBox="0 0 32 32"><path d="M0 0h32v32H0z" fill="#fae100" /><ellipse cx="16" cy="14.500" rx="12.500" ry="10" fill="#371d1e" /><path d="M9 21l-2 6 7-4z" fill="#371d1e" /><text x="16" y="17.500" textAnchor="middle" textLength="19" lengthAdjust="spacingAndGlyphs" fontSize="8.500" fontWeight="bold" fontFamily="Liberation Sans" fill="#fae100">TALK</text></svg>
      </Slot>
      <Slot w="w-[66px]">
        <svg className={s} viewBox="0 0 32 32"><path d="M10 1h16q4 1 3 5l-3 20-4 2 1-22H10z" fill="#3a9be0" /><rect x="8.500" y="4.500" width="18" height="17" rx="3" fill="none" stroke="#3ba4ea" strokeWidth="5" /><rect x="4" y="9" width="17" height="17" rx="3" fill="none" stroke="#f9a11b" strokeWidth="4.500" transform="rotate(4 12 18)" /></svg>
      </Slot>
      <Slot w="w-[60px]">
        <svg className={s} viewBox="0 0 32 32"><path d="M3 1l23 1 2 27-3 2L4 27z" fill="#0e74d8" /><path d="M26 2l2 27-3 2-1-25z" fill="#0a4c9a" /><ellipse cx="14" cy="15" rx="10" ry="11" fill="#eef4fa" /><path d="M5.500 15l5-4v3h7v-3l5 4-5 4v-3h-7v3z" fill="#145ea8" /></svg>
      </Slot>
      <Slot w="w-[58px]">
        <svg className={s} viewBox="0 0 32 32"><path d="M22 3l7 21-14 3z" fill="#e6eef4" /><path d="M12 2l15 1-9 20L2 19z" fill="#dc4a4c" /><path d="M12 2l15 1-3 6-16-1z" fill="#e88" /><path d="M12 2h15" stroke="#555" strokeWidth="2" strokeDasharray="1.500 1" /><path d="M16 20v10M11 25h10" stroke="#24972c" strokeWidth="4.500" /><path d="M27 20v10M22 25h10" stroke="#f2c51d" strokeWidth="4" /></svg>
      </Slot>
      <Slot w="w-[67px]">
        <svg className={s} viewBox="0 0 32 32"><path d="M1 1h11L9 4l5 6-3 2-5-6-4 4z" fill="#2476e0" /><path d="M11 15V8q0-5 5-5t5 5v7" fill="none" stroke="#8d8d8d" strokeWidth="3" /><path d="M7 14h18v12H7z" fill="#4c4c4c" /><path d="M10 14v12M14 14v12M18 14v12M22 14v12" stroke="#828282" /><path d="M31 31H20l4-4-5-5 3-3 5 5 4-5z" fill="#33c030" /></svg>
      </Slot>
      <Slot w="w-[60px]">
        <svg className={s} viewBox="0 0 32 32"><path d="M1 1h29v22H1z" fill="#d8dde2" stroke="#555" /><path d="M3 3h25v5H3z" fill="#7fb3ee" /><path d="M7 8h20v7H7z" fill="#f7f7f7" stroke="#888" /><path d="M13 13h18v17H13z" fill="#242424" stroke="#bbb" /><path d="M18 17h6M20 20h8M18 23h5M19 26h5" stroke="#d8c21c" strokeWidth="1.500" /><circle cx="8" cy="23" r="7.500" fill="#c3c3c3" stroke="#555" /><circle cx="8" cy="23" r="2.500" fill="#eee" stroke="#555" /></svg>
      </Slot>
      <Slot w="w-[63px]">
        <svg className={s} viewBox="0 0 32 32"><rect width="32" height="32" rx="3" fill="#ef3e2e" /><circle cx="16" cy="19" r="10.500" fill="#fff" /><circle cx="15.500" cy="15" r="4.500" fill="#ef3e2e" /><g fill="#fff"><ellipse cx="6.500" cy="10" rx="2" ry="2.300" /><ellipse cx="9.500" cy="6" rx="2.200" ry="2.600" /><ellipse cx="15" cy="5" rx="2.400" ry="2.500" /><ellipse cx="20.500" cy="5.500" rx="2.200" ry="2.500" /><ellipse cx="25" cy="9" rx="2" ry="2.600" /></g></svg>
      </Slot>
      <div className="w-[2px]" />
      <Slot w="w-[58px]" frame="alert">
        <svg className="h-[30px] w-[30px]" viewBox="0 0 30 30"><circle cx="9" cy="9" r="9" fill="#08a0e6" /><circle cx="21" cy="21" r="9" fill="#08a0e6" /><circle cx="15" cy="15" r="13" fill="#08a0e6" /><path d="M20 10q-1-3-5-3-5 0-5 3.500c0 4 10 3.500 10 8 0 3-2 4.500-5 4.500-4 0-5.500-2-5.500-4" fill="none" stroke="#fff" strokeWidth="3.500" strokeLinecap="round" /></svg>
      </Slot>
      <div className="flex-1" />
      <svg className="h-[38px] w-[216px] shrink-0" viewBox="1060 729 216 38">
        <g stroke="#6b5429" strokeWidth=".8">
          <rect x="1062.500" y="739.500" width="30" height="18" rx="1" fill="#fff" />
          <path d="M1106 752l4.500-5 4.500 5z" fill="#fff" />
          <path d="M1127.500 741h2v15h-2z" fill="#fff" /><path d="M1129.500 742q4-2 6 1 2 1 7 0l-2 6q-4 1-6-1-2-1-5 0z" fill="#fff" />
          <path d="M1151 743l7-1v6.500h-7zM1159 742l8-1.200v7.700h-8zM1151 749.500h7v6.500l-7-1zM1159 749.500h8v8l-8-1.200z" fill="#fff" />
          <path d="M1175.500 753h2v3h-2zM1178.500 751h2v5h-2zM1181.500 748.500h2v7.500h-2zM1184.500 746h2.200v10h-2.200zM1188 743h2.500v13h-2.500z" fill="#fff" />
          <path d="M1199 746h3l5-5v16l-5-5h-3z" fill="#fff" />
          <path d="M1229.500 743.500h2v-2h4v2h2v14h-8z" fill="#fff" /><path d="M1231.500 746h4v9.500h-4z" fill="#7b5b20" />
        </g>
        <path d="M1065.500 743.500h24M1065.500 747.500h24" stroke="#604e2c" strokeWidth="2.200" strokeDasharray="2.600 1.400" />
        <path d="M1065.500 753.500h24" stroke="#604e2c" strokeWidth="2.200" strokeDasharray="3 1.400 14 1.400" />
        <circle cx="1209.500" cy="751.500" r="4.200" fill="#fff" stroke="#d81e1e" strokeWidth="1.800" /><path d="M1206.500 748.500l6 6" stroke="#d81e1e" strokeWidth="1.800" />
        <circle cx="1258" cy="749" r="7.200" fill="#e6cf9a" stroke="#6b5429" strokeWidth="1.300" /><path d="M1255 746l6 6M1261 746l-6 6" stroke="#5b4a28" strokeWidth="1.700" />
      </svg>
      <div className="mr-[15px] w-[75px] whitespace-nowrap text-center text-[12.500px] font-light leading-[17px] text-white">
        <div>오후 3:28</div>
        <div>2015-06-12</div>
      </div>
    </div>
  );
}

export default function App() {
  return (
    <div className={'h-[768px] w-[1366px] overflow-hidden bg-black ' + KR}>
      <TabStrip />
      <Toolbar />
      <Bookmarks />
      <AppHeader />
      <div className="flex h-[578px]">
        <Sidebar />
        <div className="flex h-[573px]">
          <div className="w-[3px] bg-[#999]" />
          <Main />
          <div className="w-[3px] bg-[#999]" />
          <div className="w-[10px] bg-[#333] pt-[68px]"><div className="h-[362px] rounded-[1px] bg-[#666]" /></div>
        </div>
      </div>
      <Taskbar />
    </div>
  );
}
